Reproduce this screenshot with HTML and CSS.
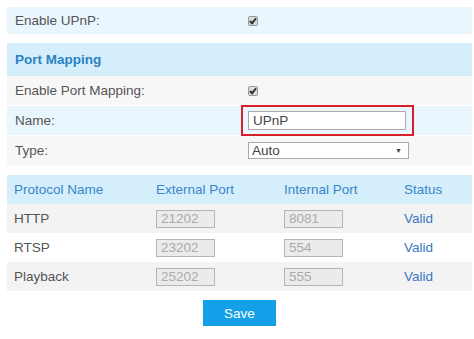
FILE: index.html
```html
<!DOCTYPE html>
<html lang="en">
<head>
    <meta charset="UTF-8">
    <title>UPnP</title>
    <link rel="stylesheet" href="styles.css">
</head>
<body>
    <div class="container">
        <div class="row row-blue upnp">
            <span class="label">Enable UPnP:</span>
            <span class="control"><span class="check"></span></span>
        </div>

        <div class="section-title">Port Mapping</div>

        <div class="row row-gray">
            <span class="label">Enable Port Mapping:</span>
            <span class="control"><span class="check"></span></span>
        </div>
        <div class="row row-blue">
            <span class="label">Name:</span>
            <span class="control">
                <span class="highlight"><input type="text" class="text-input" value="UPnP"></span>
            </span>
        </div>
        <div class="row row-gray">
            <span class="label">Type:</span>
            <span class="control">
                <span class="select">Auto<span class="arrow">&#9660;</span></span>
            </span>
        </div>

        <table class="ports">
            <thead>
                <tr>
                    <th class="col-name">Protocol Name</th>
                    <th class="col-ext">External Port</th>
                    <th class="col-int">Internal Port</th>
                    <th>Status</th>
                </tr>
            </thead>
            <tbody>
                <tr>
                    <td>HTTP</td>
                    <td><span class="port">21202</span></td>
                    <td><span class="port">8081</span></td>
                    <td class="valid">Valid</td>
                </tr>
                <tr>
                    <td>RTSP</td>
                    <td><span class="port">23202</span></td>
                    <td><span class="port">554</span></td>
                    <td class="valid">Valid</td>
                </tr>
                <tr>
                    <td>Playback</td>
                    <td><span class="port">25202</span></td>
                    <td><span class="port">555</span></td>
                    <td class="valid">Valid</td>
                </tr>
            </tbody>
        </table>

        <div class="actions">
            <button type="button" class="save">Save</button>
        </div>
    </div>
</body>
</html>
```

FILE: styles.css
```css
body {
    font-family: 'Liberation Sans', Arial, sans-serif;
    font-size: 13.5px;
    color: #555;
    margin: 0;
    padding: 7px 2px 0 7px;
    background-color: white;
}
.row {
    display: flex;
    align-items: center;
    height: 29px;
    margin-bottom: 1px;
}
.row.upnp {
    height: 27px;
    margin-bottom: 9px;
}
.row-blue {
    background-color: #eaf6fd;
}
.row-gray {
    background-color: #f7f7f7;
}
.label {
    width: 233px;
    padding-left: 8px;
    flex-shrink: 0;
}
.control {
    display: flex;
    align-items: center;
}
.check {
    width: 8px;
    height: 8px;
    border: 1px solid #999;
    border-radius: 2px;
    background-color: #ddd;
    position: relative;
}
.check::after {
    content: "";
    position: absolute;
    left: 2px;
    top: 0px;
    width: 2px;
    height: 5px;
    border: solid #333;
    border-width: 0 2px 2px 0;
    transform: rotate(40deg);
}
.section-title {
    height: 33px;
    line-height: 33px;
    padding-left: 8px;
    background-color: #d4eefc;
    color: #2a82c4;
    font-weight: bold;
}
.highlight {
    display: block;
    margin-left: -7px;
    padding: 4px 6px 4px 5px;
    border: 2px solid #d9202a;
}
.text-input {
    display: block;
    width: 148px;
    height: 17px;
    padding: 0 4px;
    border: 1px solid #aaa;
    font-family: inherit;
    font-size: 13.5px;
    color: #444;
    box-sizing: content-box;
    margin: 0;
}
.select {
    display: flex;
    justify-content: space-between;
    align-items: center;
    width: 150px;
    height: 15px;
    padding: 0 6px 0 3px;
    border: 1px solid #aaa;
    background-color: white;
    color: #444;
}
.arrow {
    font-size: 7px;
    color: #444;
}
.ports {
    width: 465px;
    border-collapse: collapse;
    margin-top: 10px;
}
.ports th {
    height: 29px;
    padding: 0 0 0 7px;
    background-color: #d4eefc;
    color: #3a86c8;
    font-weight: normal;
    text-align: left;
}
.ports td {
    height: 29px;
    padding: 0 0 0 7px;
}
.ports tbody tr:nth-child(odd) td {
    background-color: #f3f3f3;
}
.col-name {
    width: 135px;
}
.col-ext {
    width: 121px;
}
.col-int {
    width: 113px;
}
.port {
    display: block;
    width: 53px;
    height: 16px;
    line-height: 16px;
    padding-left: 4px;
    border: 1px solid #b5b5b5;
    background-color: #ebebeb;
    color: #aaa;
}
.valid {
    color: #3a78c0;
}
.actions {
    display: flex;
    justify-content: center;
    padding-top: 9px;
}
.save {
    width: 73px;
    height: 26px;
    border: none;
    background-color: #13a0e9;
    color: white;
    font-family: inherit;
    font-size: 13.5px;
    cursor: pointer;
}
```
